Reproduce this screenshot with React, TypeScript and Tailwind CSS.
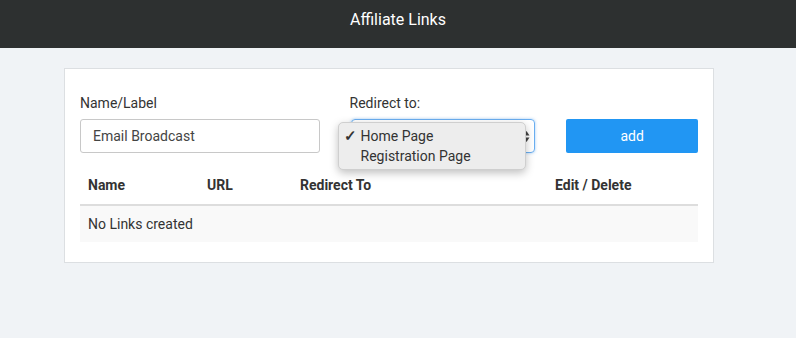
export default function App() {
  return (
    <div
      className="min-h-[338px] bg-[#f0f3f6] text-[#333] text-[14px]"
      style={{ fontFamily: 'Roboto, "Liberation Sans", sans-serif' }}
    >
      {/* Header */}
      <div className="h-[48px] bg-[#2d3030] flex justify-center pt-[9px]">
        <h1 className="text-white text-[16px] leading-[22px]">Affiliate Links</h1>
      </div>

      {/* Card */}
      <div className="ml-[64px] mt-[20px] w-[650px] bg-white border border-[#dcdfe2] px-[15px] pt-[24px] pb-[20px]">
        {/* Form */}
        <div className="flex items-end">
          <div className="w-[240px] flex flex-col">
            <label className="leading-[20px] mb-[6px]">Name/Label</label>
            <div className="h-[34px] border border-[#c8c8c8] rounded-[3px] flex items-center px-[12px] text-[#444]">
              Email Broadcast
            </div>
          </div>

          <div className="ml-[31px] w-[185px] flex flex-col relative">
            <label className="leading-[20px] mb-[6px] ml-[-1px]">Redirect to:</label>
            <div className="h-[34px] border border-[#6aaef0] rounded-[4px] shadow-[0_0_3px_rgba(60,150,240,0.5)] flex items-center justify-end pr-[4px]">
              <svg width="7" height="13" viewBox="0 0 7 13">
                <path d="M3.5 1 L6.5 5.5 H0.5 Z" fill="#444" />
                <path d="M3.5 12 L6.5 7.5 H0.5 Z" fill="#444" />
              </svg>
            </div>

            {/* Open native dropdown */}
            <div className="absolute left-[-13px] top-[29px] w-[188px] h-[48px] bg-[#ededed] border border-[#cfcfcf] rounded-[5px] shadow-[0_3px_8px_rgba(0,0,0,0.25)] pt-[3px]">
              <div className="flex items-center leading-[20px]">
                <span className="w-[22px] pl-[5px] text-[15px] font-bold">✓</span>
                <span>Home Page</span>
              </div>
              <div className="flex items-center leading-[20px]">
                <span className="w-[22px]" />
                <span>Registration Page</span>
              </div>
            </div>
          </div>

          <button className="ml-[31px] w-[132px] h-[34px] bg-[#2196f3] rounded-[2px] text-white text-[14px]">
            add
          </button>
        </div>

        {/* Table */}
        <div className="mt-[13px]">
          <div className="grid grid-cols-[119px_93px_255px_150px] font-bold border-b-2 border-[#dddddd] h-[40px] items-center">
            <span className="pl-[8px]">Name</span>
            <span className="pl-[8px]">URL</span>
            <span className="pl-[8px]">Redirect To</span>
            <span className="pl-[8px]">Edit / Delete</span>
          </div>
          <div className="h-[36px] bg-[#f9f9f9] flex items-center pl-[8px]">No Links created</div>
        </div>
      </div>
    </div>
  )
}
